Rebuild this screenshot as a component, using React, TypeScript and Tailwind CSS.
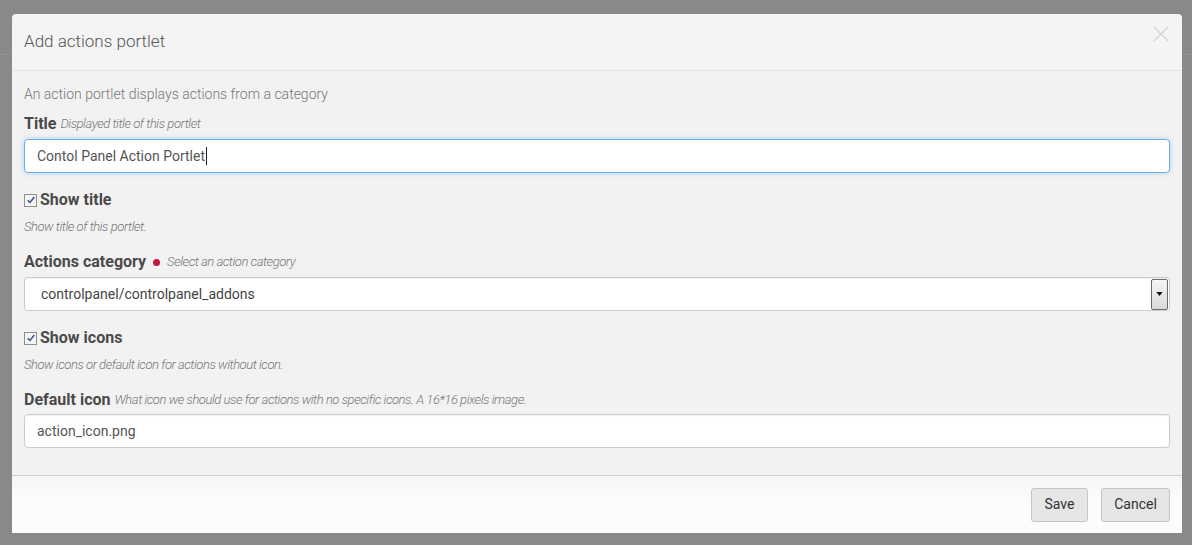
import React from "react";

const font = { fontFamily: "Roboto, 'Noto Sans', sans-serif" };

function Check() {
  return (
    <span className="flex h-[13px] w-[13px] items-center justify-center border border-[#8f8f8f] bg-[#f4f4f4]">
      <svg viewBox="0 0 12 12" className="h-[10px] w-[10px]">
        <path d="M2 6.2 L4.8 9 L10 2.5" fill="none" stroke="#3b4f8f" strokeWidth="1.8" />
      </svg>
    </span>
  );
}

function Help({ children }: { children: React.ReactNode }) {
  return (
    <span className="text-[13px] font-light italic tracking-[-0.45px] text-[#777]">{children}</span>
  );
}

function Label({ children, help }: { children: React.ReactNode; help?: React.ReactNode }) {
  return (
    <div className="flex h-5 items-center gap-[4px] leading-5">
      <span className="text-[16px] font-bold text-[#4a4a4a]">{children}</span>
      {help}
    </div>
  );
}

export default function App() {
  return (
    <div className="relative h-[545px] w-[1192px] overflow-hidden bg-[#898989]" style={font}>
      <div className="absolute left-0 right-0 top-[54px] h-px bg-[#929292]" />

      <div className="absolute left-[12px] top-[14px] flex w-[1170px] flex-col overflow-hidden rounded-t-[4px] bg-[#f4f4f4]">
        {/* header */}
        <div className="relative flex h-[57px] items-center border-b border-[#e3e3e3] px-3">
          <h4 className="text-[17px] font-light text-[#555]">Add actions portlet</h4>
          <svg viewBox="0 0 16 16" className="absolute right-[13px] top-[12px] h-[16px] w-[16px]">
            <path d="M1 1 L15 15 M15 1 L1 15" stroke="#cfd3d8" strokeWidth="1.2" />
          </svg>
        </div>

        {/* body */}
        <div className="flex flex-col bg-[#f2f2f2] px-3 pb-[27px] pt-[13px]">
          <p className="h-5 text-[14px] font-light leading-5 text-[#777]">
            An action portlet displays actions from a category
          </p>

          <div className="mt-[10px]">
            <Label help={<Help>Displayed title of this portlet</Help>}>Title</Label>
          </div>
          <div className="mt-[5px] flex h-[34px] items-center rounded-[4px] border border-[#66afe9] bg-white px-3 shadow-[0_0_5px_rgba(102,175,233,0.5)]">
            <span className="text-[14px] text-[#555]">Contol Panel Action Portlet</span>
            <span className="ml-px h-[18px] w-px bg-[#222]" />
          </div>

          <div className="mt-[17px] flex h-5 items-center gap-[3px]">
            <Check />
            <span className="text-[16px] font-bold text-[#4a4a4a]">Show title</span>
          </div>
          <div className="mt-[6px] h-5 leading-5">
            <Help>Show title of this portlet.</Help>
          </div>

          <div className="mt-[16px]">
            <Label
              help={
                <span className="flex items-center gap-[7px]">
                  <span className="ml-[3px] h-[7px] w-[7px] rounded-full bg-[#c4183c]" />
                  <Help>Select an action category</Help>
                </span>
              }
            >
              Actions category
            </Label>
          </div>
          <div className="mt-[5px] flex h-[34px] items-center justify-between rounded-[3px] border border-[#ccc] bg-white pl-4 pr-px shadow-[inset_0_1px_1px_rgba(0,0,0,0.06)]">
            <span className="text-[14px] text-[#444]">controlpanel/controlpanel_addons</span>
            <span className="flex h-[31px] w-[17px] items-center justify-center rounded-[2px] border border-[#6b6b6b] bg-gradient-to-b from-[#f6f6f6] to-[#d9d9d9]">
              <svg viewBox="0 0 8 5" className="h-[4px] w-[7px]">
                <path d="M0 0 H8 L4 5 Z" fill="#111" />
              </svg>
            </span>
          </div>

          <div className="mt-[17px] flex h-5 items-center gap-[3px]">
            <Check />
            <span className="text-[16px] font-bold text-[#4a4a4a]">Show icons</span>
          </div>
          <div className="mt-[6px] h-5 leading-5">
            <Help>Show icons or default icon for actions without icon.</Help>
          </div>

          <div className="mt-[16px]">
            <Label help={<Help>What icon we should use for actions with no specific icons. A 16*16 pixels image.</Help>}>
              Default icon
            </Label>
          </div>
          <div className="mt-[4px] flex h-[34px] items-center rounded-[4px] border border-[#ccc] bg-white px-3 shadow-[inset_0_1px_1px_rgba(0,0,0,0.06)]">
            <span className="text-[14px] text-[#555]">action_icon.png</span>
          </div>
        </div>

        {/* footer */}
        <div className="flex h-[58px] items-center justify-end gap-[13px] border-t border-[#cfcfcf] bg-gradient-to-b from-[#f5f5f5] to-[#fcfcfc] to-40% px-3">
          <button className="h-[34px] w-[57px] rounded-[3px] border border-[#c4c4c4] bg-[#e6e6e6] text-[14px] text-[#333]">
            Save
          </button>
          <button className="h-[34px] w-[69px] rounded-[3px] border border-[#c4c4c4] bg-[#e6e6e6] text-[14px] text-[#333]">
            Cancel
          </button>
        </div>
      </div>
    </div>
  );
}
